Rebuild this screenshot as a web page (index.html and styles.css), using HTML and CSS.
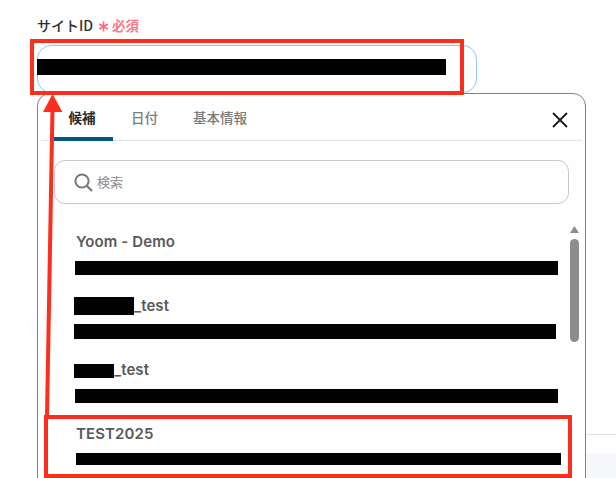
FILE: index.html
```html
<!DOCTYPE html>
<html lang="ja">
<head>
<meta charset="utf-8">
<title>サイトID</title>
<link rel="stylesheet" href="styles.css">
</head>
<body>
<div class="stage">
  <div class="backdrop"><div class="backdrop-fill"></div></div>
  <main class="form">
    <div class="label-row">
      <span class="label">サイトID</span>
      <svg class="asterisk" width="11" height="11" viewBox="0 0 11 11"><path d="M5.500 0.500V10.500M1.200 3L9.800 8M9.800 3L1.200 8" stroke="#fa6a78" stroke-width="1.700" fill="none"/></svg>
      <span class="required">必須</span>
    </div>
    <div class="input"><div class="redact input-redact"></div></div>
    <section class="panel">
      <header class="tabs">
        <div class="tab tab-active">候補</div>
        <div class="tab tab-date">日付</div>
        <div class="tab tab-info">基本情報</div>
        <svg class="close" width="16" height="16" viewBox="0 0 16 16"><path d="M1 1L15 15M15 1L1 15" stroke="#1a1a1a" stroke-width="1.800" fill="none"/></svg>
      </header>
      <div class="search">
        <svg class="search-icon" width="19" height="19" viewBox="0 0 19 19"><circle cx="8" cy="8" r="6.600" stroke="#777" stroke-width="2" fill="none"/><path d="M12.800 12.800L18 18" stroke="#777" stroke-width="2.200" fill="none"/></svg>
        <span class="search-text">検索</span>
      </div>
      <div class="list-wrap">
        <ul class="list">
          <li class="item item-1">
            <div class="name">Yoom - Demo</div>
            <div class="redact id-1"></div>
          </li>
          <li class="item item-2">
            <div class="name"><span class="redact mask-1"></span>_test</div>
            <div class="redact id-2"></div>
          </li>
          <li class="item item-3">
            <div class="name name-tight"><span class="redact mask-2"></span><span class="raised">_test</span></div>
            <div class="redact id-3"></div>
          </li>
          <li class="item item-4">
            <div class="name">TEST2025</div>
            <div class="redact id-4"></div>
          </li>
        </ul>
        <div class="scrollbar">
          <svg class="scroll-arrow" width="9" height="7" viewBox="0 0 9 7"><path d="M4.500 0L9 7H0Z" fill="#8e8c91"/></svg>
          <div class="scroll-thumb"></div>
        </div>
      </div>
    </section>
  </main>
  <svg class="annotations" width="616" height="478" viewBox="0 0 616 478">
    <rect x="32" y="41" width="430" height="52" fill="none" stroke="#fb2f1e" stroke-width="4"/>
    <rect x="46" y="417" width="524" height="59" fill="none" stroke="#fb2f1e" stroke-width="4"/>
    <path d="M47 416L52.500 108" stroke="#fb2f1e" stroke-width="4" fill="none"/>
    <path d="M52.500 94L62.500 112H43Z" fill="#fb2f1e"/>
  </svg>
</div>
</body>
</html>
```
FILE: styles.css
```css
* { box-sizing: border-box; }
html, body { margin: 0; padding: 0; background: #fff; }
body { font-family: "Inter", "Noto Sans CJK JP", sans-serif; overflow: hidden; }
.stage { position: relative; width: 616px; height: 478px; overflow: hidden; background: #fffefe; }
.backdrop { position: absolute; left: 586px; right: 0; top: 434px; bottom: 0; border-top: 1px solid #e3e3ea; padding-top: 18px; }
.backdrop-fill { height: 100%; background: #f5f7fb; }
.form { position: relative; padding: 16px 0 0 37px; width: 586px; }
.label-row { display: flex; align-items: center; height: 18px; margin-bottom: 11px; }
.label { font-family: "Noto Sans CJK JP", sans-serif; font-size: 14px; font-weight: 500; color: #2f2f2f; width: 61px; }
.asterisk { flex: none; margin: 3px 3px 0 0; }
.required { font-family: "Noto Sans CJK JP", sans-serif; font-size: 13.500px; font-weight: 700; color: #fa7884; }
.input { width: 440px; height: 48px; border: 1px solid #8fc6f4; border-radius: 14px; padding-top: 13px; background: #fff; }
.redact { background: #020104; }
.input-redact { width: 409px; height: 16px; margin-left: -1px; }
.panel { width: 549px; height: 400px; border: 1px solid #808080; border-radius: 13px; background: #fffeff; }
.tabs { position: relative; display: flex; height: 47px; margin: 0 3px; border-bottom: 1px solid #e4e4e4; font-family: "Noto Sans CJK JP", sans-serif; font-size: 13.500px; }
.tab { height: 47px; line-height: 47px; color: #7b7b7b; font-weight: 500; }
.tab-active { width: 59px; margin-left: 13px; padding-right: 3px; text-align: center; color: #2a2a2a; font-weight: 700; border-bottom: 4px solid #02597f; border-radius: 0 3px 0 0; }
.tab-date { margin-left: 18px; }
.tab-info { margin-left: 35px; }
.close { position: absolute; right: 14px; top: 18px; }
.search { display: flex; align-items: center; width: 515px; height: 44px; margin: 19px 0 0 16px; padding-left: 19px; border: 1px solid #c8c8c8; border-radius: 11px; }
.search-icon { flex: none; }
.search-text { margin: -1px 0 0 4px; font-family: "Noto Sans CJK JP", sans-serif; font-size: 13px; color: #8a8a8a; }
.list-wrap { position: relative; }
.list { list-style: none; margin: 0; padding: 0; }
.item { position: relative; }
.name { font-size: 15px; font-weight: 600; line-height: 18px; letter-spacing: .1px; color: #595959; display: flex; align-items: center; }
.name-tight { height: 18px; }
.raised { margin-bottom: 2px; }
.item-1 { padding: 29px 0 0 38px; }
.item-1 .name { margin-bottom: 10px; }
.id-1 { width: 483px; height: 14px; margin-left: -1px; }
.item-2 { padding: 22px 0 0 36px; }
.item-2 .name { margin-bottom: 9px; }
.mask-1 { width: 60px; height: 18px; }
.id-2 { width: 482px; height: 15px; }
.item-3 { padding: 23px 0 0 36px; }
.item-3 .name { margin-bottom: 9px; }
.mask-2 { width: 40px; height: 14px; }
.id-3 { width: 483px; height: 14px; margin-left: 1px; }
.item-4 { padding: 22px 0 0 38px; }
.item-4 .name { margin-bottom: 10px; }
.id-4 { width: 485px; height: 12px; }
.scrollbar { position: absolute; left: 532px; top: 22px; width: 9px; }
.scroll-arrow { display: block; margin-bottom: 6px; }
.scroll-thumb { height: 103px; border-radius: 5px; background: #8e8c91; }
.annotations { position: absolute; left: 0; top: 0; pointer-events: none; }
```
